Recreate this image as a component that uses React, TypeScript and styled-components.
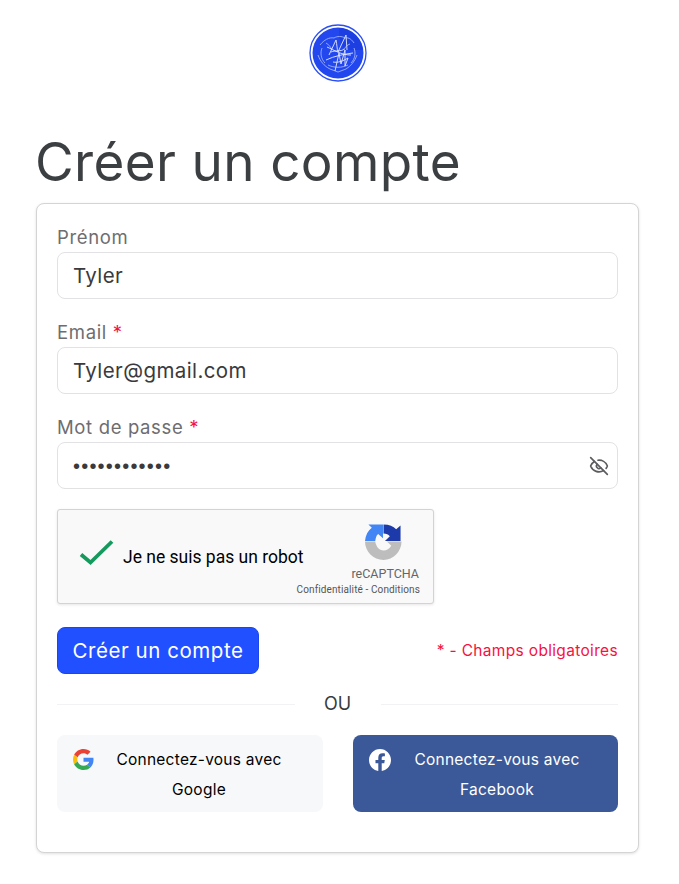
import React from "react";
import styled, { createGlobalStyle } from "styled-components";
import { LuEyeOff } from "react-icons/lu";

const GlobalStyle = createGlobalStyle`
  html, body {
    margin: 0;
    padding: 0;
    background: #ffffff;
    font-family: "Inter", "Open Sans", sans-serif;
  }
`;

const App = () => {
  return (
    <Page>
      <GlobalStyle />
      <LogoRow>
        <svg width="58" height="58" viewBox="0 0 58 58">
          <circle cx="29" cy="29" r="28" fill="#ffffff" stroke="#2a4ff2" strokeWidth="1.3" />
          <circle cx="29" cy="29" r="25.5" fill="#2347ee" />
          <path d="M30 4a25 25 0 0 1 24 22H36c-6-8-6-16-6-22z" fill="#1a38d8" opacity="0.55" />
          <path d="M11 21c4-5 9-8 14-7 3-2 8-2 11 0 4-1 7 2 9 5M9 31c2 6 6 11 12 14l8 3 8-3c5-3 9-8 11-14M13 24c-2 5-1 11 3 15M45 24c2 5 1 11-3 15M17 19c3 2 5 4 6 7M41 20c-3 1-5 3-6 6M19 41c6 3 14 3 20 0" fill="none" stroke="#9fb1fa" strokeWidth="0.9" />
          <path d="M20 31l7-15c1 5 1 9 2 12l8-17 1 15M26 47l4-18 2 11 4-14 0 16 3-8M17 36c8-4 19-6 27-7M18 23c7 3 14 8 24 8M22 28c5-2 10 0 13-3M24 38c5 1 10-1 15-4" fill="none" stroke="#e3e9ff" strokeWidth="0.9" />
        </svg>
      </LogoRow>
      <Title>Créer un compte</Title>
      <Card>
        <Field>
          <Label>Prénom</Label>
          <Input readOnly value="Tyler" />
        </Field>
        <Field>
          <Label>Email <Star>*</Star></Label>
          <Input readOnly value="Tyler@gmail.com" />
        </Field>
        <Field>
          <Label>Mot de passe <Star>*</Star></Label>
          <InputWrap>
            <Input readOnly type="password" value="Tyler1234567" />
            <EyeButton><LuEyeOff size={20} /></EyeButton>
          </InputWrap>
        </Field>
        <Captcha>
          <CheckMark width="38" height="30" viewBox="0 0 38 30">
            <path d="M3 17.500l9.500 8L34 4.500" fill="none" stroke="#159a5e" strokeWidth="3.8" />
          </CheckMark>
          <CaptchaLabel>Je ne suis pas un robot</CaptchaLabel>
          <CaptchaBrand>
            <BrandLogo width="37" height="36" viewBox="0 0 38 38" preserveAspectRatio="none">
              <path d="M0 18C.5 12 3 7 7 4L3.500.500H18.500V15L13.500 10.500C11.500 12 11 15 10.500 18Z" fill="#4285f4" />
              <path d="M19 .500C25 .500 29 2.500 32 5.500L36.500 1.500V18H20.500L25.500 13C24 11 22 10 19 10Z" fill="#1c3aa9" />
              <path d="M0 18.500H10.500C11.500 24 14.500 28 19 28C22.500 28 25 26 27 23L22.500 18.500H37.500C37.500 29 29 38 19 38C8.500 38 0 29 0 18.500Z" fill="#bdbdbd" />
            </BrandLogo>
            <BrandName>reCAPTCHA</BrandName>
            <BrandLinks>Confidentialité - Conditions</BrandLinks>
          </CaptchaBrand>
        </Captcha>
        <SubmitRow>
          <SubmitButton type="button">Créer un compte</SubmitButton>
          <Required>* - Champs obligatoires</Required>
        </SubmitRow>
        <Divider><span>OU</span></Divider>
        <SocialRow>
          <SocialButton type="button">
            <SocialIcon>
              <svg width="21" height="21" viewBox="0 0 48 48">
                <path fill="#EA4335" d="M24 9.500c3.500 0 6.700 1.200 9.200 3.600l6.900-6.900C35.900 2.400 30.500 0 24 0 14.600 0 6.500 5.400 2.600 13.200l8 6.200C12.500 13.700 17.800 9.500 24 9.500z" />
                <path fill="#4285F4" d="M46.900 24.500c0-1.600-.1-3.100-.4-4.500H24v9h12.900c-.6 3-2.300 5.500-4.800 7.200l7.700 6c4.500-4.200 7.100-10.300 7.100-17.700z" />
                <path fill="#FBBC05" d="M10.500 28.600c-.5-1.400-.8-3-.8-4.600s.3-3.200.8-4.600l-8-6.200C.9 16.500 0 20.100 0 24s.9 7.500 2.600 10.800l7.900-6.200z" />
                <path fill="#34A853" d="M24 48c6.500 0 11.900-2.100 15.900-5.800l-7.700-6c-2.200 1.500-4.900 2.300-8.200 2.300-6.200 0-11.500-4.200-13.400-9.900l-8 6.200C6.500 42.600 14.600 48 24 48z" />
              </svg>
            </SocialIcon>
            <SocialText>Connectez-vous avec Google</SocialText>
          </SocialButton>
          <SocialButton type="button" $facebook>
            <SocialIcon>
              <svg width="22" height="22" viewBox="0 0 24 24">
                <path fill="#ffffff" d="M24 12.070C24 5.400 18.630 0 12 0S0 5.400 0 12.070c0 6.030 4.390 11.020 10.130 11.930v-8.440H7.080v-3.490h3.050V9.410c0-3.020 1.790-4.690 4.530-4.690 1.310 0 2.680.24 2.680.24v2.970h-1.510c-1.490 0-1.960.93-1.960 1.890v2.250h3.330l-.53 3.490h-2.800V24C19.610 23.100 24 18.100 24 12.070z" />
              </svg>
            </SocialIcon>
            <SocialText>Connectez-vous avec Facebook</SocialText>
          </SocialButton>
        </SocialRow>
      </Card>
    </Page>
  );
};

const Page = styled.div`
  box-sizing: border-box;
  width: 679px;
  min-height: 884px;
  padding: 24px 40px 0 36px;
  color: #3a3a3c;
`;

const LogoRow = styled.div`
  display: flex;
  justify-content: center;
  height: 58px;
`;

const Title = styled.h1`
  margin: 46px 0 7px -1px;
  font-size: 53px;
  line-height: 68px;
  font-weight: 400;
  color: #3c3f42;
  letter-spacing: 0.35px;
`;

const Card = styled.div`
  box-sizing: border-box;
  width: 603px;
  height: 650px;
  padding: 20px;
  background: #ffffff;
  border: 1px solid #d4d4d4;
  border-radius: 8px;
  box-shadow: 0 1px 3px rgba(0, 0, 0, 0.12);
`;

const Field = styled.div`
  margin-bottom: 20px;
`;

const Label = styled.label`
  display: block;
  height: 28px;
  font-size: 18.5px;
  line-height: 26px;
  letter-spacing: 0.65px;
  color: #6d6d70;
`;

const Star = styled.span`
  color: #f5123f;
`;

const InputWrap = styled.div`
  position: relative;
`;

const Input = styled.input`
  display: block;
  box-sizing: border-box;
  width: 100%;
  height: 47px;
  padding: 0 15px;
  font-family: inherit;
  font-size: 20.5px;
  letter-spacing: 0.4px;
  color: #3a3a3c;
  background: #ffffff;
  border: 1px solid #e2e2e4;
  border-radius: 8px;
  outline: none;
  &[type="password"] {
    padding-top: 2px;
    font-family: "Liberation Sans", sans-serif;
    font-size: 20px;
    letter-spacing: 1.2px;
  }
`;

const EyeButton = styled.span`
  position: absolute;
  top: 14px;
  right: 9px;
  display: flex;
  color: #5c5c5f;
`;

const Captcha = styled.div`
  box-sizing: border-box;
  display: flex;
  align-items: center;
  width: 377px;
  height: 95px;
  margin-bottom: 23px;
  background: #f9f9f9;
  border: 1px solid #d3d3d3;
  border-radius: 3px;
  box-shadow: 0 1px 3px rgba(0, 0, 0, 0.1);
`;

const CheckMark = styled.svg`
  flex: none;
  margin: 0 7px 10px 20px;
`;

const CaptchaLabel = styled.span`
  flex: 1;
  font-family: "Roboto", sans-serif;
  font-size: 17.5px;
  white-space: nowrap;
  color: #000000;
`;

const CaptchaBrand = styled.div`
  box-sizing: border-box;
  flex: none;
  display: flex;
  flex-direction: column;
  align-items: flex-end;
  align-self: flex-start;
  width: 124px;
  padding: 14px 14px 0 0;
`;

const BrandLogo = styled.svg`
  margin-right: 17px;
`;

const BrandName = styled.div`
  font-family: "Roboto", sans-serif;
  font-size: 12.5px;
  line-height: 14px;
  color: #666666;
  margin-top: 7px;
`;

const BrandLinks = styled.div`
  font-family: "Roboto", sans-serif;
  font-size: 10px;
  line-height: 12px;
  letter-spacing: 0.11px;
  color: #555555;
  white-space: nowrap;
  margin: 3px -1px 0 0;
`;

const SubmitRow = styled.div`
  display: flex;
  align-items: center;
  justify-content: space-between;
  margin-bottom: 11px;
`;

const SubmitButton = styled.button`
  box-sizing: border-box;
  width: 202px;
  height: 47px;
  padding: 0;
  font-family: inherit;
  font-size: 20.5px;
  letter-spacing: 0.55px;
  color: #ffffff;
  background: #2050ff;
  border: 1px solid #1c47e6;
  border-radius: 8px;
`;

const Required = styled.span`
  font-size: 15.5px;
  letter-spacing: 0.33px;
  color: #f5123f;
`;

const Divider = styled.div`
  display: flex;
  align-items: center;
  justify-content: center;
  height: 36px;
  margin-bottom: 14px;
  font-size: 18px;
  color: #3a3a3c;
  &::before,
  &::after {
    content: "";
    flex: 1;
    height: 1px;
    margin-top: 2px;
    background: #f2f2f4;
  }
  span {
    width: 86px;
    text-align: center;
  }
`;

const SocialRow = styled.div`
  display: flex;
  justify-content: space-between;
`;

const SocialButton = styled.button<{ $facebook?: boolean }>`
  box-sizing: border-box;
  display: flex;
  width: ${p => (p.$facebook ? "265px" : "266px")};
  height: 77px;
  padding: 0 ${p => (p.$facebook ? "15px" : "20px")} 0 16px;
  font-family: inherit;
  font-size: 15.5px;
  letter-spacing: 0.25px;
  line-height: 30px;
  text-align: center;
  color: ${p => (p.$facebook ? "#ffffff" : "#000000")};
  background: ${p => (p.$facebook ? "#3b5998" : "#f7f8fa")};
  border: 0;
  border-radius: 8px;
`;

const SocialIcon = styled.span`
  flex: none;
  display: flex;
  width: 22px;
  margin-top: 14px;
`;

const SocialText = styled.span`
  flex: 1;
  padding-top: 10px;
`;

export default App;
